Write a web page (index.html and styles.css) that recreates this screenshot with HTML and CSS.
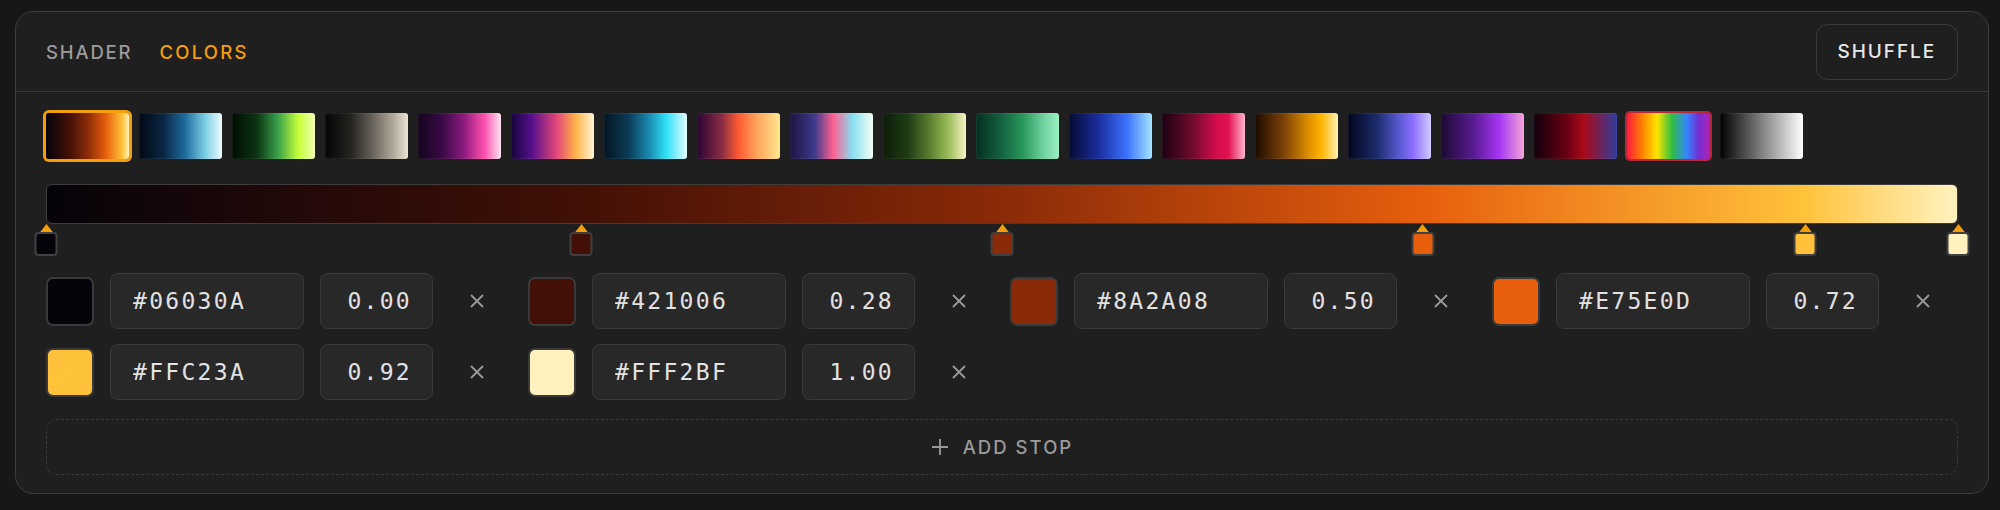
FILE: index.html
```html
<!DOCTYPE html>
<html>
  <head>
    <title>Gradient Editor</title>
    <link rel="stylesheet" href="styles.css">
  </head>
  <body>
    <div class="panel">
      <div class="panel-head">
        <div class="tabs">
          <button class="tab">SHADER</button>
          <button class="tab active">COLORS</button>
        </div>
        <button class="shuffle">SHUFFLE</button>
      </div>

      <div class="panel-body">
        <div class="presets">
          <button class="preset p-ember selected"></button>
          <button class="preset p-ocean"></button>
          <button class="preset p-lime"></button>
          <button class="preset p-ash"></button>
          <button class="preset p-orchid"></button>
          <button class="preset p-sunset"></button>
          <button class="preset p-lagoon"></button>
          <button class="preset p-peach"></button>
          <button class="preset p-vapor"></button>
          <button class="preset p-moss"></button>
          <button class="preset p-jade"></button>
          <button class="preset p-cobalt"></button>
          <button class="preset p-crimson"></button>
          <button class="preset p-amber"></button>
          <button class="preset p-dusk"></button>
          <button class="preset p-violet"></button>
          <button class="preset p-blood"></button>
          <button class="preset p-spectrum hovered"></button>
          <button class="preset p-mono"></button>
        </div>

        <div class="gradient-bar"></div>

        <div class="stop-track">
          <div class="marker" style="left: 0%"><span class="marker-tip"></span><span class="marker-box" style="background: #06030A"></span></div>
          <div class="marker" style="left: 28%"><span class="marker-tip"></span><span class="marker-box" style="background: #421006"></span></div>
          <div class="marker" style="left: 50%"><span class="marker-tip"></span><span class="marker-box" style="background: #8A2A08"></span></div>
          <div class="marker" style="left: 72%"><span class="marker-tip"></span><span class="marker-box" style="background: #E75E0D"></span></div>
          <div class="marker" style="left: 92%"><span class="marker-tip"></span><span class="marker-box" style="background: #FFC23A"></span></div>
          <div class="marker" style="left: 100%"><span class="marker-tip"></span><span class="marker-box" style="background: #FFF2BF"></span></div>
        </div>

        <div class="stop-list">
          <div class="stop-row">
            <span class="stop-color" style="background: #06030A"></span>
            <input class="stop-hex" type="text" value="#06030A" />
            <input class="stop-pos" type="text" value="0.00" />
            <button class="stop-remove"><svg viewBox="0 0 16 16"><path d="M2 2 L14 14 M14 2 L2 14" /></svg></button>
          </div>
          <div class="stop-row">
            <span class="stop-color" style="background: #421006"></span>
            <input class="stop-hex" type="text" value="#421006" />
            <input class="stop-pos" type="text" value="0.28" />
            <button class="stop-remove"><svg viewBox="0 0 16 16"><path d="M2 2 L14 14 M14 2 L2 14" /></svg></button>
          </div>
          <div class="stop-row">
            <span class="stop-color" style="background: #8A2A08"></span>
            <input class="stop-hex" type="text" value="#8A2A08" />
            <input class="stop-pos" type="text" value="0.50" />
            <button class="stop-remove"><svg viewBox="0 0 16 16"><path d="M2 2 L14 14 M14 2 L2 14" /></svg></button>
          </div>
          <div class="stop-row">
            <span class="stop-color" style="background: #E75E0D"></span>
            <input class="stop-hex" type="text" value="#E75E0D" />
            <input class="stop-pos" type="text" value="0.72" />
            <button class="stop-remove"><svg viewBox="0 0 16 16"><path d="M2 2 L14 14 M14 2 L2 14" /></svg></button>
          </div>
          <div class="stop-row">
            <span class="stop-color" style="background: #FFC23A"></span>
            <input class="stop-hex" type="text" value="#FFC23A" />
            <input class="stop-pos" type="text" value="0.92" />
            <button class="stop-remove"><svg viewBox="0 0 16 16"><path d="M2 2 L14 14 M14 2 L2 14" /></svg></button>
          </div>
          <div class="stop-row">
            <span class="stop-color" style="background: #FFF2BF"></span>
            <input class="stop-hex" type="text" value="#FFF2BF" />
            <input class="stop-pos" type="text" value="1.00" />
            <button class="stop-remove"><svg viewBox="0 0 16 16"><path d="M2 2 L14 14 M14 2 L2 14" /></svg></button>
          </div>
        </div>

        <button class="add-stop">
          <svg viewBox="0 0 18 18"><path d="M9 1 V17 M1 9 H17" /></svg>
          <span>ADD STOP</span>
        </button>
      </div>
    </div>
  </body>
</html>
```

FILE: styles.css
```css
body {
  background-color: #171717;
  color: #e6e6e6;
  font-family: Inter, 'Noto Sans', sans-serif;
  margin: 0;
  padding: 11px 11px 0 15px;
}

button {
  font-family: inherit;
  cursor: pointer;
}

.panel {
  background-color: #1f1f1f;
  border: 1px solid #3d3d3d;
  border-radius: 18px;
}

.panel-head {
  display: flex;
  align-items: center;
  justify-content: space-between;
  height: 79px;
  padding: 0 30px;
  border-bottom: 1px solid #383838;
}

.tabs {
  display: flex;
  gap: 27px;
}

.tab {
  background: none;
  border: none;
  padding: 0;
  color: #9b9b9b;
  font-size: 18.5px;
  font-weight: 500;
  letter-spacing: 0.1em;
}

.tab.active {
  color: #f59e0b;
  letter-spacing: 0.12em;
}

.shuffle {
  height: 56px;
  padding: 0 21px;
  background: none;
  border: 1px solid #3a3a3a;
  border-radius: 12px;
  color: #e8e8e8;
  font-size: 19px;
  font-weight: 500;
  letter-spacing: 0.1em;
}

.panel-body {
  padding: 21px 30px 18px;
}

/* preset gradients */
.presets {
  display: flex;
  gap: 10px;
}

.preset {
  width: 83px;
  height: 46px;
  padding: 0;
  border: none;
  border-radius: 3px;
  box-shadow: inset 0 0 0 1px rgba(255, 255, 255, 0.06);
}

.preset.selected {
  box-shadow: 0 0 0 3px #f59e0b;
}

.preset.hovered {
  box-shadow: 0 0 0 2px #b8263a;
}

.p-ember { background: linear-gradient(90deg, #06030A 0%, #421006 28%, #8A2A08 50%, #E75E0D 72%, #FFC23A 92%, #FFF2BF 100%); }
.p-ocean { background: linear-gradient(90deg, #020914 0%, #0b2746 30%, #1d6a9c 55%, #7ccfe6 80%, #effcff 100%); }
.p-lime { background: linear-gradient(90deg, #020d04 0%, #0d3412 30%, #37a04a 55%, #c6ff3a 80%, #f2ffb4 100%); }
.p-ash { background: linear-gradient(90deg, #050505 0%, #22211e 30%, #625d55 55%, #aaa294 80%, #ebe3d2 100%); }
.p-orchid { background: linear-gradient(90deg, #14041e 0%, #3c0a48 30%, #8c1a7e 55%, #ff4fae 80%, #ffe4f2 100%); }
.p-sunset { background: linear-gradient(90deg, #14053c 0%, #560f8c 25%, #e2467a 55%, #ffb347 78%, #fff4d6 100%); }
.p-lagoon { background: linear-gradient(90deg, #021522 0%, #0c3c58 30%, #1a8cb2 55%, #2ee0f6 75%, #e4fdff 100%); }
.p-peach { background: linear-gradient(90deg, #2a0534 0%, #8a2c44 30%, #ff5a32 50%, #ffa45c 72%, #ffe690 100%); }
.p-vapor { background: linear-gradient(90deg, #1c1442 0%, #3e3a8c 30%, #ff6092 52%, #86def0 75%, #f4fff4 100%); }
.p-moss { background: linear-gradient(90deg, #0c1c08 0%, #1e3c14 30%, #587a2c 55%, #98ba56 78%, #f6f2c4 100%); }
.p-jade { background: linear-gradient(90deg, #053020 0%, #146040 30%, #259458 55%, #6ccf9c 80%, #9ef0c2 100%); }
.p-cobalt { background: linear-gradient(90deg, #050a32 0%, #1a2c9c 35%, #3c72ff 70%, #a4e4ff 100%); }
.p-crimson { background: linear-gradient(90deg, #1c0012 0%, #6a0a2c 35%, #d20c4c 65%, #e21252 80%, #ffb4cc 100%); }
.p-amber { background: linear-gradient(90deg, #1c0a00 0%, #7c4208 35%, #e09000 65%, #ffb400 80%, #fff2b4 100%); }
.p-dusk { background: linear-gradient(90deg, #02051c 0%, #1c2c6c 35%, #5a5ad2 62%, #8a6cff 78%, #d2caff 100%); }
.p-violet { background: linear-gradient(90deg, #1c0a32 0%, #5a1c92 40%, #a434f4 70%, #f4a4d8 100%); }
.p-blood { background: linear-gradient(90deg, #12000c 0%, #6a0012 40%, #aa0a1a 60%, #303c9c 100%); }
.p-spectrum { background: linear-gradient(90deg, #ff1a40 0%, #ff8000 18%, #ffe400 36%, #30c040 54%, #3384ff 72%, #7230d4 86%, #b020b4 100%); }
.p-mono { background: linear-gradient(90deg, #000000 0%, #ffffff 100%); }

/* main gradient bar and stop markers */
.gradient-bar {
  margin-top: 25px;
  height: 40px;
  box-sizing: border-box;
  border: 1px solid #3d3d3d;
  border-radius: 6px;
  background: linear-gradient(90deg, #06030A 0%, #421006 28%, #8A2A08 50%, #E75E0D 72%, #FFC23A 92%, #FFF2BF 100%);
}

.stop-track {
  position: relative;
  height: 32px;
}

.marker {
  position: absolute;
  top: 0;
  display: flex;
  flex-direction: column;
  align-items: center;
  transform: translateX(-50%);
}

.marker-tip {
  width: 0;
  height: 0;
  border-left: 7px solid transparent;
  border-right: 7px solid transparent;
  border-bottom: 9px solid #f59e0b;
}

.marker-box {
  width: 23px;
  height: 24px;
  margin-top: -1px;
  box-sizing: border-box;
  border: 2px solid #404040;
  border-radius: 4px;
}

/* stop editor rows */
.stop-list {
  margin-top: 17px;
  display: grid;
  grid-template-columns: repeat(4, 1fr);
  column-gap: 16px;
  row-gap: 15px;
}

.stop-row {
  display: flex;
  align-items: center;
  gap: 16px;
}

.stop-color {
  width: 48px;
  height: 49px;
  box-sizing: border-box;
  border: 2px solid #3a3a3a;
  border-radius: 7px;
}

.stop-hex, .stop-pos {
  height: 56px;
  box-sizing: border-box;
  background-color: #282828;
  border: 1.5px solid #3a3a3a;
  border-radius: 8px;
  color: #e2e2e2;
  font-family: 'DejaVu Sans Mono', monospace;
  font-size: 23px;
  letter-spacing: 0.1em;
  outline: none;
}

.stop-hex {
  width: 194px;
  padding: 0 0 0 22px;
}

.stop-pos {
  width: 113px;
  padding: 0 20px 0 0;
  text-align: right;
}

.stop-remove {
  width: 56px;
  height: 56px;
  padding: 0;
  background: none;
  border: none;
  display: flex;
  align-items: center;
  justify-content: center;
}

.stop-remove svg {
  width: 16px;
  height: 16px;
  stroke: #9a9a9a;
  stroke-width: 1.8;
  fill: none;
}

.add-stop {
  margin-top: 19px;
  width: 100%;
  height: 56px;
  display: flex;
  align-items: center;
  justify-content: center;
  gap: 14px;
  background: none;
  border: 1.5px dashed #3a3a3a;
  border-radius: 10px;
  color: #9a9a9a;
  font-size: 18.5px;
  font-weight: 500;
  letter-spacing: 0.11em;
}

.add-stop svg {
  width: 18px;
  height: 18px;
  stroke: #9a9a9a;
  stroke-width: 1.8;
  fill: none;
}
```
